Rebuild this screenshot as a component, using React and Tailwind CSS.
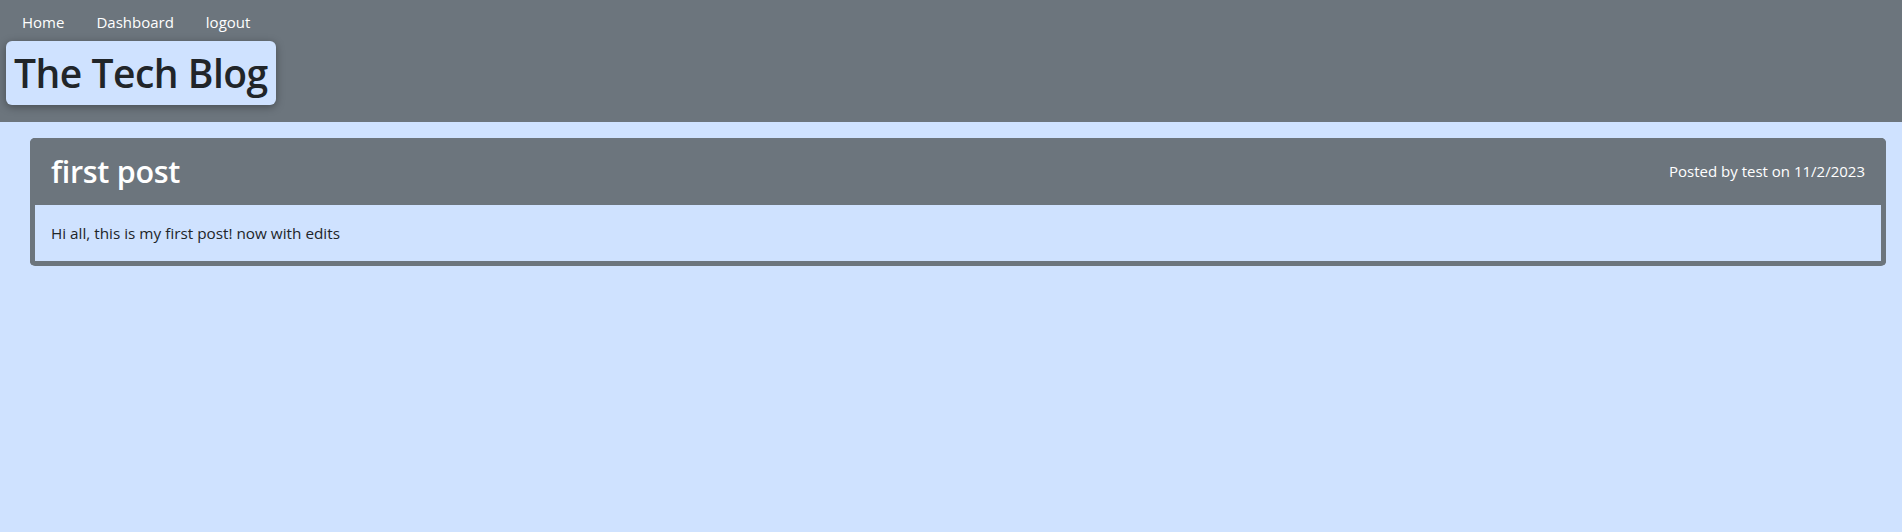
const App = () => {
    return (
        <div className="min-h-[532px] bg-[#cfe2ff] font-['Open_Sans',sans-serif]">
            <header className="h-[122px] bg-[#6c757d] px-[6px] pt-[9px]">
                <nav className="flex text-[15px] text-white">
                    <a className="px-4 py-[2px]" href="#">Home</a>
                    <a className="px-4 py-[2px]" href="#">Dashboard</a>
                    <a className="px-4 py-[2px]" href="#">logout</a>
                </nav>
                <div className="mt-[5px] inline-flex h-[64px] items-center rounded-md bg-[#cfe2ff] px-[8px] shadow-[0_2px_8px_rgba(0,0,0,0.35)]">
                    <h1 className="text-[39px] font-semibold leading-none tracking-[-0.5px] text-[#212529]">The Tech Blog</h1>
                </div>
            </header>
            <main className="ml-[30px] mr-[16px] pt-[16px]">
                <div className="rounded-[5px] border-[5px] border-t-0 border-[#6c757d] bg-[#cfe2ff]">
                    <div className="-mx-[5px] flex h-[67px] items-center justify-between rounded-t-[5px] bg-[#6c757d] pl-[21px] pr-[21px] text-white">
                        <h2 className="text-[30.5px] font-semibold leading-none tracking-[-0.3px]">first post</h2>
                        <span className="text-[15px]">Posted by test on 11/2/2023</span>
                    </div>
                    <div className="h-[56px] px-[16px] pt-[17px] text-[15.3px] text-[#212529]">
                        <p>Hi all, this is my first post! now with edits</p>
                    </div>
                </div>
            </main>
        </div>
    );
};

export default App;
